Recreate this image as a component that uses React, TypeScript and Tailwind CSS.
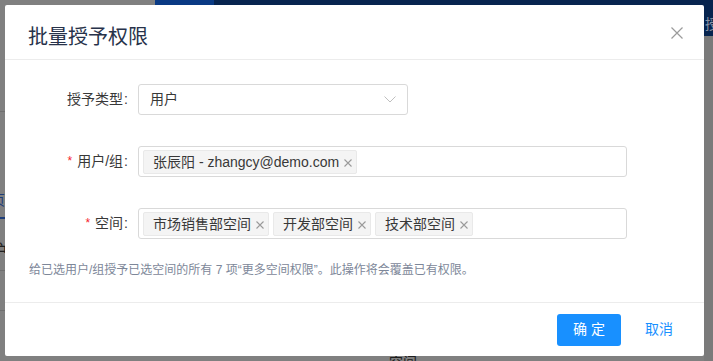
import React from 'react';

const font = { fontFamily: '"Liberation Sans", "Noto Sans CJK SC", sans-serif' };

function Tag({ label }: { label: string }) {
  return (
    <span className="flex items-center h-[24px] pl-[9px] pr-[4px] bg-[#f4f4f4] border border-[#e9e9e9] rounded-[2px] text-[14px] text-[#383838] leading-none whitespace-nowrap">
      {label}
      <svg width="8" height="8" viewBox="0 0 8 8" className="ml-[5px] mt-[2px]">
        <path d="M0.5 0.5 L7.5 7.5 M7.5 0.5 L0.5 7.5" stroke="#9a9a9a" strokeWidth="1.1" />
      </svg>
    </span>
  );
}

function Label({ text, required }: { text: string; required?: boolean }) {
  return (
    <div className="w-[125px] flex justify-end items-center text-[14px] text-[#383838] pr-[2px]">
      {required && <span className="text-[#f5222d] text-[12px] mr-[5px] mt-[-2px]">*</span>}
      <span>{text}</span>
      <span className="ml-[1px]">:</span>
    </div>
  );
}

export default function App() {
  return (
    <div className="relative w-[713px] h-[361px] bg-[#808080] overflow-hidden" style={font}>
      {/* page behind the mask */}
      <div className="absolute inset-x-0 top-0 h-[36px] flex">
        <div className="w-[155px] bg-[#808080]" />
        <div className="w-[59px] h-[6px] bg-[#0a3a84]" />
        <div className="flex-1 bg-[#07244f]" />
      </div>
      <span className="absolute right-[-6px] top-[14px] text-[14px] text-[#8a94a6]">授</span>
      <div className="absolute left-0 top-[111px] w-[6px] h-px bg-[#6f6f6f]" />
      <span className="absolute left-[-9px] top-[190px] text-[14px] text-[#1d3d7a]">页</span>
      <div className="absolute left-0 top-[217px] w-[6px] h-[2px] bg-[#1d3d7a]" />
      <span className="absolute left-[-11px] top-[239px] text-[18px] text-[#202020]">护</span>
      <div className="absolute left-0 top-[270px] w-[6px] h-px bg-[#6f6f6f]" />
      <div className="absolute left-0 top-[310px] w-[6px] h-px bg-[#6f6f6f]" />
      <div className="absolute right-0 top-[36px] w-[9px] h-[325px] bg-[#7a7a7a]" />
      <span className="absolute left-[389px] top-[352px] text-[14px] text-[#1e1e1e]">空间</span>

      {/* modal */}
      <div className="absolute left-[5px] top-[5px] w-[699px] h-[351px] bg-white rounded-[2px] flex flex-col">
        <div className="h-[55px] border-b border-[#ececec] flex justify-between items-start pl-[23px] pr-[21px]">
          <h2 className="pt-[18px] text-[20px] leading-[28px] text-[#27324a]">批量授予权限</h2>
          <svg width="12" height="12" viewBox="0 0 12 12" className="mt-[22px]">
            <path d="M0.5 0.5 L11.5 11.5 M11.5 0.5 L0.5 11.5" stroke="#9b9b9b" strokeWidth="1.2" />
          </svg>
        </div>

        <div className="h-[243px] border-b border-[#ececec] pt-[24px] flex flex-col">
          <div className="flex flex-col gap-[31px]">
            <div className="flex items-center h-[31px]">
              <Label text="授予类型" />
              <div className="ml-[8px] w-[270px] h-[31px] border border-[#d9d9d9] rounded-[3px] flex items-center justify-between pl-[11px] pr-[11px]">
                <span className="text-[14px] text-[#383838]">用户</span>
                <svg width="12" height="7" viewBox="0 0 12 7">
                  <path d="M0.5 0.5 L6 6 L11.5 0.5" fill="none" stroke="#bfbfbf" strokeWidth="1" />
                </svg>
              </div>
            </div>

            <div className="flex items-center h-[31px]">
              <Label text="用户/组" required />
              <div className="ml-[8px] w-[489px] h-[31px] border border-[#d9d9d9] rounded-[3px] flex items-center pl-[4px]">
                <Tag label="张辰阳 - zhangcy@demo.com" />
              </div>
            </div>

            <div className="flex items-center h-[31px]">
              <Label text="空间" required />
              <div className="ml-[8px] w-[489px] h-[31px] border border-[#d9d9d9] rounded-[3px] flex items-center gap-[4px] pl-[4px]">
                <Tag label="市场销售部空间" />
                <Tag label="开发部空间" />
                <Tag label="技术部空间" />
              </div>
            </div>
          </div>

          <p className="mt-[21px] pl-[24px] text-[12px] leading-[20px] text-[#7d8799]">
            给已选用户/组授予已选空间的所有 7 项“更多空间权限”。此操作将会覆盖已有权限。
          </p>
        </div>

        <div className="flex-1 flex items-center justify-end pr-[13px] gap-[6px]">
          <button className="w-[64px] h-[32px] bg-[#1890ff] rounded-[3px] text-white text-[14px]">确 定</button>
          <button className="w-[64px] h-[32px] text-[#1890ff] text-[14px]">取消</button>
        </div>
      </div>
    </div>
  );
}
